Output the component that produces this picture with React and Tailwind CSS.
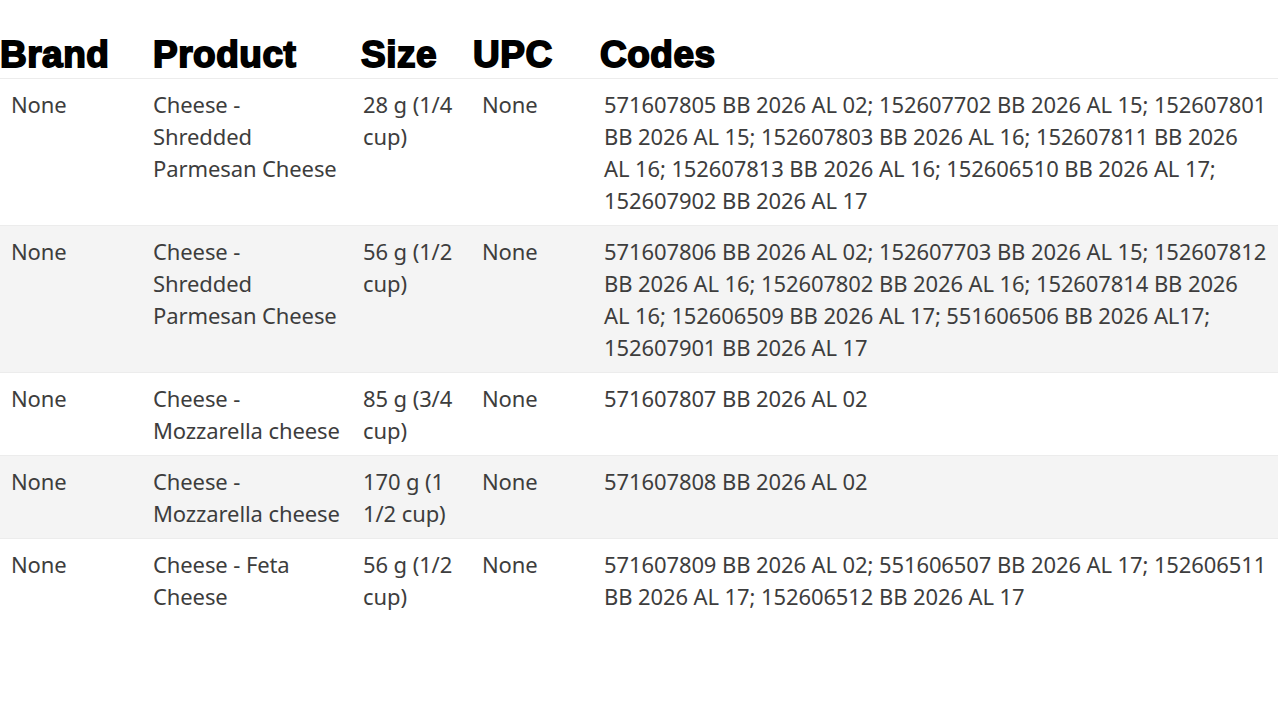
const rows = [
  {
    brand: 'None',
    product: ['Cheese -', 'Shredded', 'Parmesan Cheese'],
    size: ['28 g (1/4', 'cup)'],
    upc: 'None',
    codes: [
      '571607805 BB 2026 AL 02; 152607702 BB 2026 AL 15; 152607801',
      'BB 2026 AL 15; 152607803 BB 2026 AL 16; 152607811 BB 2026',
      'AL 16; 152607813 BB 2026 AL 16; 152606510 BB 2026 AL 17;',
      '152607902 BB 2026 AL 17',
    ],
  },
  {
    brand: 'None',
    product: ['Cheese -', 'Shredded', 'Parmesan Cheese'],
    size: ['56 g (1/2', 'cup)'],
    upc: 'None',
    codes: [
      '571607806 BB 2026 AL 02; 152607703 BB 2026 AL 15; 152607812',
      'BB 2026 AL 16; 152607802 BB 2026 AL 16; 152607814 BB 2026',
      'AL 16; 152606509 BB 2026 AL 17; 551606506 BB 2026 AL17;',
      '152607901 BB 2026 AL 17',
    ],
  },
  {
    brand: 'None',
    product: ['Cheese -', 'Mozzarella cheese'],
    size: ['85 g (3/4', 'cup)'],
    upc: 'None',
    codes: ['571607807 BB 2026 AL 02'],
  },
  {
    brand: 'None',
    product: ['Cheese -', 'Mozzarella cheese'],
    size: ['170 g (1', '1/2 cup)'],
    upc: 'None',
    codes: ['571607808 BB 2026 AL 02'],
  },
  {
    brand: 'None',
    product: ['Cheese - Feta', 'Cheese'],
    size: ['56 g (1/2', 'cup)'],
    upc: 'None',
    codes: [
      '571607809 BB 2026 AL 02; 551606507 BB 2026 AL 17; 152606511',
      'BB 2026 AL 17; 152606512 BB 2026 AL 17',
    ],
  },
];

const Lines = ({ lines }) => (
  <div>
    {lines.map((line, i) => (
      <div key={i} className="whitespace-nowrap">{line}</div>
    ))}
  </div>
);

const cols = 'grid grid-cols-[143px_210px_119px_122px_1fr]';

export default function App() {
  return (
    <div className="min-h-screen bg-white w-[1278px]">
      {/* Header */}
      <div className="grid grid-cols-[153px_208px_112px_127px_1fr] h-[79px] items-end pb-[1px] border-b border-[#ececec] font-['Liberation_Sans',Arial,sans-serif] font-bold text-[37px] leading-[44px] text-black [-webkit-text-stroke:1.8px_black] tracking-[0.5px]">
        <div>Brand</div>
        <div>Product</div>
        <div>Size</div>
        <div>UPC</div>
        <div>Codes</div>
      </div>

      {/* Body */}
      <div className="font-['Noto_Sans',sans-serif] text-[22px] tracking-[-0.1px] leading-[32px] text-[#3d3d3d]">
        {rows.map((row, i) => (
          <div
            key={i}
            className={`${cols} py-[9px] ${i > 0 ? 'border-t border-[#ececec]' : ''} ${i % 2 === 1 ? 'bg-[#f4f4f4]' : ''}`}
          >
            <div className="pl-[11px]">{row.brand}</div>
            <div className="pl-[10px]"><Lines lines={row.product} /></div>
            <div className="pl-[10px]"><Lines lines={row.size} /></div>
            <div className="pl-[10px]">{row.upc}</div>
            <div className="pl-[10px]"><Lines lines={row.codes} /></div>
          </div>
        ))}
      </div>
    </div>
  );
}
